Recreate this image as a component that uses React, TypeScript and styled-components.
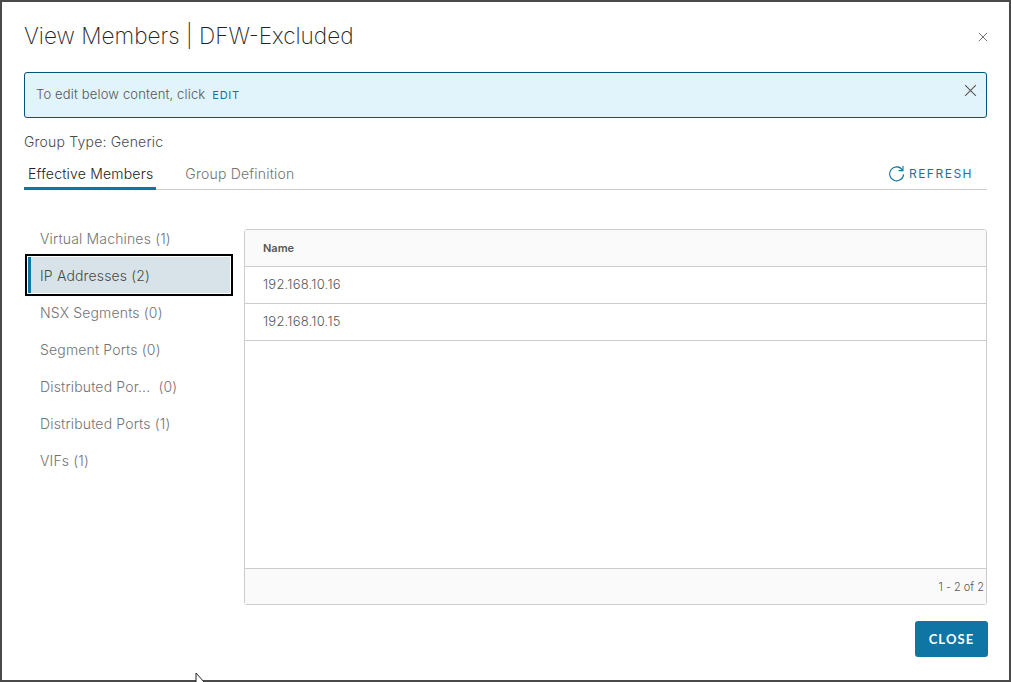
import styled, { createGlobalStyle } from 'styled-components';

const members = [
  { label: 'Virtual Machines (1)' },
  { label: 'IP Addresses (2)', active: true },
  { label: 'NSX Segments (0)' },
  { label: 'Segment Ports (0)' },
  { label: 'Distributed Por...  (0)' },
  { label: 'Distributed Ports (1)' },
  { label: 'VIFs (1)' },
];

const addresses = ['192.168.10.16', '192.168.10.15'];

const CloseIcon = ({ size }: { size: number }) => (
  <svg width={size} height={size} viewBox="0 0 12 12" fill="none" stroke="#565656" strokeWidth="1">
    <path d="M1 1l10 10M11 1L1 11" />
  </svg>
);

const RefreshIcon = () => (
  <svg width="17" height="17" viewBox="0 0 17 17" fill="none" stroke="#0f75a5" strokeWidth="1.1">
    <path d="M14.6 5.2A7 7 0 1 0 15.6 9.4" />
    <path d="M10.6 5.6h4.4V1.1" />
  </svg>
);

export default function App() {
  return (
    <>
      <GlobalStyle />
      <Page>
        <Dialog>
          <Header>
            <Title>View Members | DFW-Excluded</Title>
            <HeaderClose><CloseIcon size={10} /></HeaderClose>
          </Header>
          <Alert>
            <AlertText>To edit below content, click <EditLink>EDIT</EditLink></AlertText>
            <AlertClose><CloseIcon size={13} /></AlertClose>
          </Alert>
          <GroupType>Group Type: Generic</GroupType>
          <Tabs>
            <Tab $active>Effective Members</Tab>
            <Tab>Group Definition</Tab>
            <Refresh><RefreshIcon />REFRESH</Refresh>
          </Tabs>
          <Content>
            <SideList>
              {members.map((item) => (
                <SideItem key={item.label} $active={item.active}>{item.label}</SideItem>
              ))}
            </SideList>
            <Grid>
              <GridHead>Name</GridHead>
              <GridBody>
                {addresses.map((ip) => (
                  <GridRow key={ip}>{ip}</GridRow>
                ))}
              </GridBody>
              <GridFooter>1 - 2 of 2</GridFooter>
            </Grid>
          </Content>
          <Footer>
            <CloseButton>CLOSE</CloseButton>
          </Footer>
        </Dialog>
        <Cursor width="12" height="10" viewBox="0 0 12 10">
          <path d="M1 0v10h9L1 0z" fill="#fff" stroke="#222" strokeWidth="1" />
        </Cursor>
      </Page>
    </>
  );
}

const GlobalStyle = createGlobalStyle`
  html, body {
    margin: 0;
    height: 100%;
    overflow: hidden;
    background: #4a4a4a;
  }
  body {
    font-family: Inter, "Open Sans", sans-serif;
    font-weight: 300;
  }
`;

const Page = styled.div`
  position: relative;
  width: 1011px;
  height: 682px;
  padding: 2px;
  box-sizing: border-box;
`;

const Dialog = styled.div`
  width: 1007px;
  height: 678px;
  background: #fff;
  padding: 0 22px;
  box-sizing: border-box;
  display: flex;
  flex-direction: column;
`;

const Header = styled.div`
  height: 70px;
  display: flex;
  align-items: center;
  justify-content: space-between;
  padding-bottom: 3px;
  box-sizing: border-box;
`;

const Title = styled.div`
  font-weight: 200;
  font-size: 22.6px;
  color: #222;
`;

const HeaderClose = styled.div`
  display: flex;
  margin-right: -1px;
  padding-top: 2px;
`;

const Alert = styled.div`
  position: relative;
  width: 963px;
  height: 46px;
  box-sizing: border-box;
  background: #e1f3fb;
  border: 1px solid #00567a;
  border-radius: 3px;
  display: flex;
  align-items: center;
  padding: 0 12px 3px 11px;
`;

const AlertText = styled.div`
  font-size: 13px;
  color: #565656;
  letter-spacing: 0.16px;
`;

const EditLink = styled.span`
  font-size: 11px;
  font-weight: 400;
  color: #0f75a5;
  letter-spacing: 0.8px;
  margin-left: 3px;
`;

const AlertClose = styled.div`
  position: absolute;
  top: 11px;
  right: 9px;
  display: flex;
`;

const GroupType = styled.div`
  margin-top: 15px;
  font-size: 14px;
  line-height: 18px;
  color: #4a4a4a;
  letter-spacing: 0.2px;
`;

const Tabs = styled.div`
  margin-top: 9px;
  width: 963px;
  height: 30px;
  box-sizing: border-box;
  border-bottom: 1px solid #ccc;
  display: flex;
  align-items: stretch;
  gap: 25px;
`;

const Tab = styled.div<{ $active?: boolean }>`
  padding: 0 3px 0 4px;
  font-size: 14px;
  line-height: 28px;
  height: 30px;
  box-sizing: border-box;
  letter-spacing: 0.2px;
  color: ${({ $active }) => ($active ? '#222' : '#737373')};
  border-bottom: ${({ $active }) => ($active ? '3px solid #0f75a5' : 'none')};
`;

const Refresh = styled.div`
  margin-left: auto;
  margin-right: 14px;
  display: flex;
  align-items: center;
  gap: 4px;
  height: 26px;
  font-size: 12px;
  font-weight: 400;
  color: #0f75a5;
  letter-spacing: 1.5px;
`;

const Content = styled.div`
  margin-top: 30px;
  display: flex;
  align-items: flex-start;
  width: 963px;
`;

const SideList = styled.div`
  width: 208px;
  margin: 0 11px 0 1px;
`;

const SideItem = styled.div<{ $active?: boolean }>`
  height: 37px;
  box-sizing: border-box;
  display: flex;
  align-items: center;
  white-space: pre;
  font-size: 14px;
  letter-spacing: 0.16px;
  padding-left: 15px;
  color: ${({ $active }) => ($active ? '#4a4a4a' : '#737373')};
  ${({ $active }) =>
    $active &&
    `
    position: relative;
    z-index: 1;
    height: 42px;
    margin: -3px 0 -2px;
    background: #d8e3e9;
    border: 2px solid #000;
    box-shadow: inset 0 0 0 1px #fff, inset 3px 0 0 1px #0f75a5;
    padding-left: 13px;
  `}
`;

const Grid = styled.div`
  margin-top: 9px;
  width: 743px;
  height: 376px;
  box-sizing: border-box;
  border: 1px solid #ccc;
  border-radius: 3px;
  display: flex;
  flex-direction: column;
`;

const GridHead = styled.div`
  height: 37px;
  box-sizing: border-box;
  background: #fafafa;
  border-bottom: 1px solid #ccc;
  padding-left: 18px;
  display: flex;
  align-items: center;
  font-size: 11px;
  font-weight: 600;
  color: #565656;
`;

const GridBody = styled.div`
  flex: 1;
`;

const GridRow = styled.div`
  height: 37px;
  box-sizing: border-box;
  border-bottom: 1px solid #ccc;
  padding: 0 0 2px 18px;
  display: flex;
  align-items: center;
  font-size: 13px;
  letter-spacing: 0.22px;
  color: #565656;
`;

const GridFooter = styled.div`
  height: 36px;
  box-sizing: border-box;
  background: #fafafa;
  border-top: 1px solid #ccc;
  display: flex;
  align-items: center;
  justify-content: flex-end;
  padding-right: 2px;
  font-size: 11px;
  color: #565656;
`;

const Footer = styled.div`
  margin-top: 16px;
  width: 964px;
  display: flex;
  justify-content: flex-end;
`;

const CloseButton = styled.button`
  width: 73px;
  height: 36px;
  border: none;
  border-radius: 3px;
  background: #0f75a5;
  color: #fff;
  font-family: Lato, sans-serif;
  font-size: 13px;
  font-weight: 700;
  letter-spacing: 1.1px;
  padding: 0;
`;

const Cursor = styled.svg`
  position: absolute;
  left: 195px;
  top: 673px;
`;
